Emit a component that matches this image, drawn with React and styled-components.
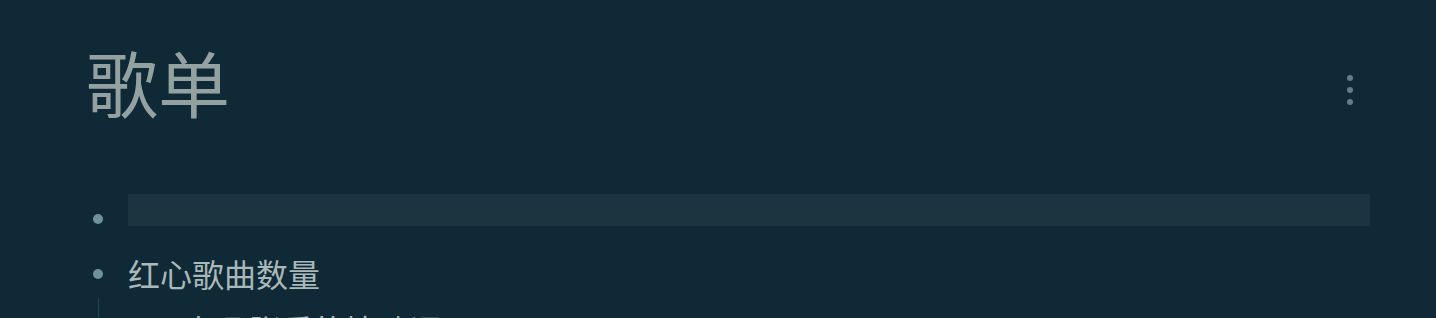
import React from 'react';
import styled, { createGlobalStyle } from 'styled-components';

const GlobalStyle = createGlobalStyle`
  html, body {
    margin: 0;
    padding: 0;
    background: #0f2a36;
    overflow: hidden;
  }
  body {
    font-family: 'Noto Sans CJK SC', 'Noto Sans', sans-serif;
  }
`;

const Page = styled.div`
  height: 318px;
  overflow: hidden;
  padding: 21px 66px 0 88px;
  box-sizing: border-box;
  background: #0f2a36;
`;

const Header = styled.header`
  display: flex;
  align-items: flex-start;
  justify-content: space-between;
`;

const Title = styled.h1`
  margin: 0 0 0 -2px;
  font-size: 72px;
  font-weight: 400;
  line-height: 120px;
  color: #93a1a1;
`;

const MoreButton = styled.button`
  display: flex;
  flex-direction: column;
  gap: 6px;
  padding: 0;
  margin: 54px 17px 0 0;
  border: 0;
  background: none;
  span {
    width: 6px;
    height: 6px;
    border-radius: 50%;
    background: #5f7f88;
  }
`;

const Blocks = styled.ul`
  list-style: none;
  margin: 53px 0 0;
  padding: 0;
  display: flex;
  flex-direction: column;
  gap: 29px;
`;

const Block = styled.li`
  display: grid;
  grid-template-columns: 20px 1fr;
  column-gap: 20px;
  align-items: start;
`;

const Bullet = styled.span`
  width: 10px;
  height: 10px;
  margin: ${(p) => p.$top}px 0 0 5px;
  border-radius: 50%;
  background: #6f9197;
`;

const Editor = styled.div`
  height: 32px;
  background: #1a3540;
`;

const Text = styled.div`
  font-size: 32px;
  line-height: 36px;
  color: #a9b8b8;
`;

const Children = styled.ul`
  grid-column: 1 / -1;
  list-style: none;
  margin: 7px 0 0 10px;
  padding: 0 0 0 86px;
  border-left: 1px solid #1f4552;
`;

const ChildText = styled(Text)`
  padding-top: 13px;
`;

export default function App() {
  return (
    <Page>
      <GlobalStyle />
      <Header>
        <Title>歌单</Title>
        <MoreButton aria-label="更多">
          <span />
          <span />
          <span />
        </MoreButton>
      </Header>
      <Blocks>
        <Block>
          <Bullet $top={20} />
          <Editor />
        </Block>
        <Block>
          <Bullet $top={14} />
          <Text>红心歌曲数量</Text>
          <Children>
            <li>
              <ChildText>有几张爱的情歌词</ChildText>
            </li>
          </Children>
        </Block>
      </Blocks>
    </Page>
  );
}
